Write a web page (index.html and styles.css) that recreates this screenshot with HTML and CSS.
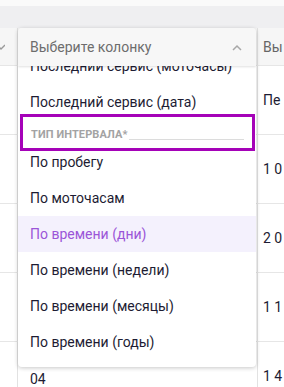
FILE: index.html
```html
<!DOCTYPE html>
<html lang="ru">
<head>
    <meta charset="UTF-8">
    <meta name="viewport" content="width=device-width, initial-scale=1.0">
    <title>Выберите колонку</title>
    <link rel="stylesheet" href="styles.css">
</head>
<body>
<div class="page">
    <div class="topbar"></div>
    <div class="table">
        <div class="row head">
            <div class="cell edge">
                <svg class="sort" width="8" height="6" viewBox="0 0 8 6"><polyline points="0,1 4,5 8,1" fill="none" stroke="#9a9a9a" stroke-width="1.4"/></svg>
            </div>
            <div class="cell mid"></div>
            <div class="cell right muted">Вы</div>
        </div>
        <div class="row">
            <div class="cell edge"></div>
            <div class="cell mid"></div>
            <div class="cell right">Пе</div>
        </div>
        <div class="row">
            <div class="cell edge"></div>
            <div class="cell mid"></div>
            <div class="cell right">1 0</div>
        </div>
        <div class="row">
            <div class="cell edge"></div>
            <div class="cell mid"></div>
            <div class="cell right">2 0</div>
        </div>
        <div class="row">
            <div class="cell edge"></div>
            <div class="cell mid"></div>
            <div class="cell right">1 1</div>
        </div>
        <div class="row">
            <div class="cell edge"></div>
            <div class="cell mid">04</div>
            <div class="cell right">1 4</div>
        </div>
    </div>

    <!-- выпадающий список колонок -->
    <div class="select">
        <div class="select-head">
            <span>Выберите колонку</span>
            <svg width="10" height="7" viewBox="0 0 10 7"><polyline points="1,6 5,2 9,6" fill="none" stroke="#a8a8a8" stroke-width="1.5"/></svg>
        </div>
        <div class="select-list">
            <div class="options">
                <div class="option">Последний сервис (моточасы)</div>
                <div class="option">Последний сервис (дата)</div>
                <div class="group">
                    <span>Тип интервала*</span>
                    <i class="group-line"></i>
                </div>
                <div class="option">По пробегу</div>
                <div class="option">По моточасам</div>
                <div class="option active">По времени (дни)</div>
                <div class="option">По времени (недели)</div>
                <div class="option">По времени (месяцы)</div>
                <div class="option">По времени (годы)</div>
            </div>
        </div>
    </div>
</div>
</body>
</html>
```

FILE: styles.css
```css
body {
    margin: 0;
    font-family: Roboto, "Noto Sans", sans-serif;
    font-size: 14px;
    color: #1d1c33;
    background: #fff;
}
.page {
    position: relative;
    height: 387px;
    overflow: hidden;
}
.topbar {
    height: 22px;
    border-top: 6px solid #fafafa;
    background: #efeff1;
}
.table {
    display: flex;
    flex-direction: column;
}
.row {
    display: flex;
    height: 68px;
    border-bottom: 1px solid #e6e6e6;
}
.row.head {
    height: 37px;
    background: #f6f6f6;
}
.cell {
    display: flex;
    align-items: center;
}
.edge {
    width: 17px;
    border-right: 1px solid #e2e2e2;
    overflow: hidden;
}
.sort {
    margin-left: -3px;
}
.mid {
    width: 227px;
    padding-left: 12px;
    border-right: 1px solid #e2e2e2;
    padding-top: 6px;
}
.right {
    flex: 1;
    padding-left: 5px;
    white-space: nowrap;
}
.muted {
    color: #666;
}
.select {
    position: absolute;
    left: 18px;
    top: 28px;
    width: 238px;
    border-radius: 4px;
    box-shadow: 0 1px 4px rgba(0, 0, 0, 0.22);
    background: #fff;
    overflow: hidden;
}
.select-head {
    height: 38px;
    background: #f7f7f7;
    display: flex;
    align-items: center;
    justify-content: space-between;
    padding: 0 14px 0 12px;
    color: #6d6d6d;
    box-shadow: 0 1px 2px rgba(0, 0, 0, 0.12);
    position: relative;
    z-index: 2;
}
.select-list {
    height: 301px;
    overflow: hidden;
}
.options {
    margin-top: -18px;
}
.option {
    height: 36px;
    display: flex;
    align-items: center;
    padding-left: 12px;
    white-space: nowrap;
}
.option.active {
    background: #f4f1fd;
    color: #9b55d8;
}
.group {
    position: relative;
    z-index: 1;
    width: 213px;
    height: 28px;
    margin: -6px 1px -7px 2px;
    padding: 3px 8px 0 8px;
    border: 3px solid #a502b8;
    background: #fff;
    display: flex;
    align-items: center;
}
.group span {
    font-size: 11px;
    font-weight: 700;
    text-transform: uppercase;
    color: #a3a3a3;
    letter-spacing: 0.1px;
    white-space: nowrap;
}
.group-line {
    flex: 1;
    height: 1px;
    background: #dcdcdc;
    margin: 10px 0 0 1px;
}
```
